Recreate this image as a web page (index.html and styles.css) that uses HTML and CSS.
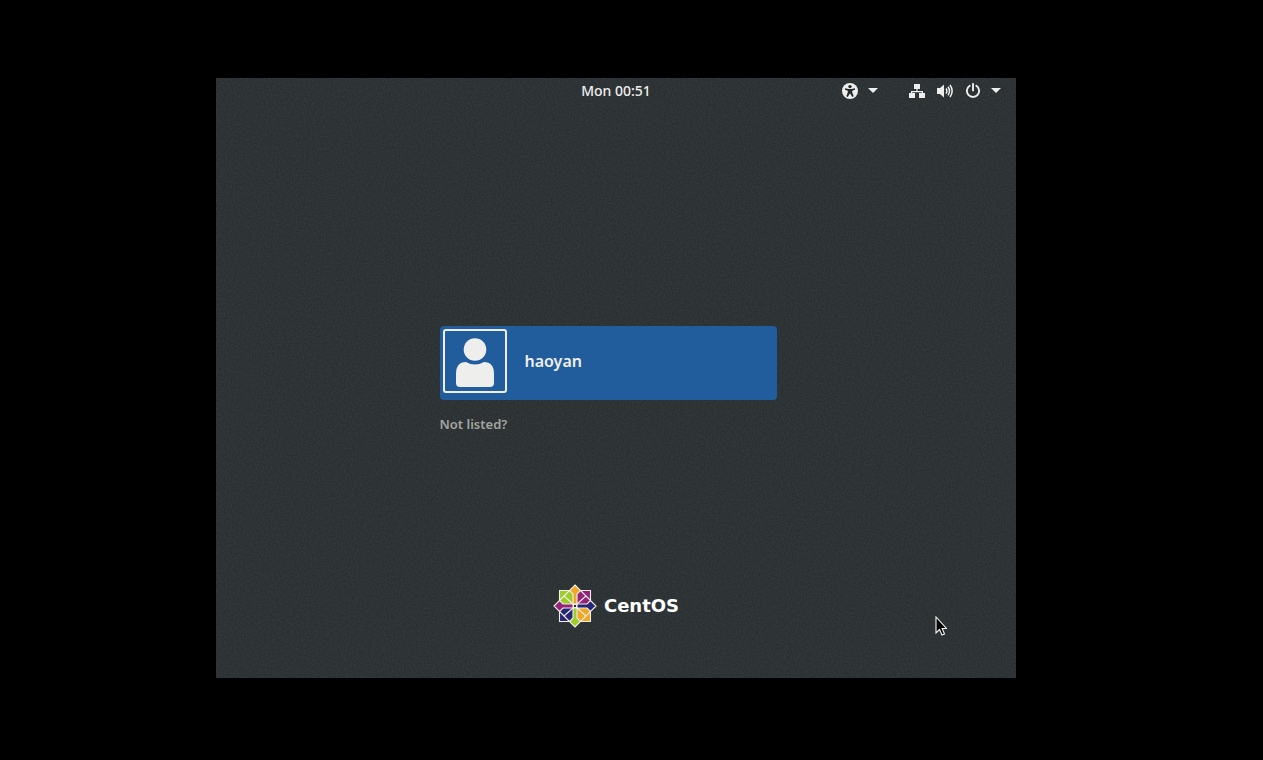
FILE: index.html
```html
<!DOCTYPE html>
<html lang="en">
<head>
<meta charset="utf-8">
<title>Login</title>
<link rel="stylesheet" href="styles.css">
</head>
<body>
<div class="screen">
  <svg class="texture" aria-hidden="true">
    <filter id="grain"><feTurbulence type="fractalNoise" baseFrequency="0.6" numOctaves="2" seed="4"/><feColorMatrix values="0 0 0 0 1  0 0 0 0 1  0 0 0 0 1  0.5 0 0 0 -0.15"/></filter>
    <rect width="100%" height="100%" filter="url(#grain)"/>
  </svg>
  <header class="topbar">
    <time class="clock">Mon 00:51</time>
    <div class="status">
      <button class="menu" type="button" aria-label="Accessibility">
        <svg class="icon" viewBox="0 0 16 16"><circle cx="8" cy="8" r="8" fill="#eeeeec"/><circle cx="8" cy="3.6" r="1.7" fill="#22282a"/><path d="M3 5.2 6.4 6H9.6L13 5.2V6.8L10.2 7.8V9.2L11.7 13.3 10.3 13.9 8 10.2 5.7 13.9 4.3 13.3 5.8 9.2V7.8L3 6.8Z" fill="#22282a"/></svg>
        <svg class="caret" viewBox="0 0 10 6"><path d="M0 0H10L5 5Z" fill="#eeeeec"/></svg>
      </button>
      <button class="menu" type="button" aria-label="System">
        <svg class="icon" viewBox="0 0 16 16" fill="#eeeeec"><path d="M5 1H11V6H8.6V8H14V10H16V15H10V10H12.8V9.2H3.2V10H6V15H0V10H2V8H7.4V6H5Z"/></svg>
        <svg class="icon" viewBox="0 0 16 16"><path d="M0 5H3L7 1.5V14.5L3 11H0Z" fill="#eeeeec"/><path d="M9 5.5Q10.8 8 9 10.5M11 3.7Q14 8 11 12.3M13 2Q17.3 8 13 14" fill="none" stroke="#eeeeec" stroke-width="1.5"/></svg>
        <svg class="icon" viewBox="0 0 16 16"><path d="M4.7 2.8A6.1 6.1 0 1 0 11.3 2.8M8 .9V7.5" fill="none" stroke="#eeeeec" stroke-width="1.9" stroke-linecap="round"/></svg>
        <svg class="caret" viewBox="0 0 10 6"><path d="M0 0H10L5 5Z" fill="#eeeeec"/></svg>
      </button>
    </div>
  </header>
  <main class="login">
    <button class="user" type="button">
      <svg class="avatar" viewBox="0 0 60 60"><circle cx="30" cy="18.5" r="11.3" fill="#eeeeec"/><path d="M11 52V43Q11 31 21 31Q30 36 39 31Q49 31 49 43V52Q49 56 45 56H15Q11 56 11 52Z" fill="#eeeeec"/></svg>
      <span class="name">haoyan</span>
    </button>
    <button class="unlisted" type="button">Not listed?</button>
  </main>
  <footer class="brand">
    <svg class="logo" viewBox="0 0 44 44" stroke="#f1eee8" stroke-width="1.1">
      <path d="M6.5 6.5H22V22H6.5Z" fill="#9ccd2a"/>
      <path d="M22 6.5H37.5V22H22Z" fill="#932279"/>
      <path d="M6.5 22H22V37.5H6.5Z" fill="#262577"/>
      <path d="M22 22H37.5V37.5H22Z" fill="#efa724"/>
      <path d="M22 1 27.5 6.5 24 10V20H20V10L16.5 6.5Z" fill="#efa724"/>
      <path d="M43 22 37.5 27.5 34 24H24V20H34L37.5 16.5Z" fill="#262577"/>
      <path d="M22 43 16.5 37.5 20 34V24H24V34L27.5 37.5Z" fill="#9ccd2a"/>
      <path d="M1 22 6.5 16.5 10 20H20V24H10L6.5 27.5Z" fill="#932279"/>
      <path d="M16.5 6.5 11 12 20 20M6.5 16.5 11 12M27.5 6.5 33 12 24 20M37.5 16.5 33 12M6.5 27.5 11 32 20 24M16.5 37.5 11 32M37.5 27.5 33 32 24 24M27.5 37.5 33 32" fill="none"/>
      <path d="M20.5 20.5H23.5V23.5H20.5Z" fill="#24242b"/>
    </svg>
    <span class="wordmark">CentOS</span>
  </footer>
  <svg class="pointer" viewBox="0 0 12 20"><path d="M1 1V17L4.5 13.5 7 19 9.5 18 7.2 12.5H11.5Z" fill="#050505" stroke="#f4f4f4" stroke-width="1.1"/></svg>
</div>
</body>
</html>
```
FILE: styles.css
```css
* { box-sizing: border-box; }
body {
  margin: 0;
  min-height: 100vh;
  padding: 78px 247px 82px 216px;
  display: flex;
  background: #000;
  color: #eeeeec;
  font-family: "Noto Sans", "Open Sans", sans-serif;
}
button {
  margin: 0;
  padding: 0;
  border: 0;
  background: none;
  color: inherit;
  font: inherit;
}
svg { display: block; flex: none; }
.screen {
  position: relative;
  flex: 1;
  display: flex;
  flex-direction: column;
  background: #2a3032;
}
.texture {
  position: absolute;
  inset: 0;
  width: 100%;
  height: 100%;
  opacity: .2;
}
.topbar, .login, .brand { position: relative; }
.topbar {
  display: grid;
  grid-template-columns: 1fr auto 1fr;
  align-items: center;
  height: 26px;
  padding: 0 15px;
}
.clock {
  grid-column: 2;
  font-size: 14px;
  font-weight: 500;
  line-height: 20px;
}
.status {
  justify-self: end;
  display: flex;
  gap: 31px;
}
.menu {
  display: flex;
  align-items: center;
  gap: 12px;
}
.icon { width: 16px; height: 16px; }
.icon + .caret { margin-left: -2px; }
.caret { width: 10px; height: 6px; }
.login {
  flex: 1;
  display: flex;
  flex-direction: column;
  justify-content: center;
  align-items: flex-start;
  gap: 14px;
  width: 353px;
  margin: 0 auto;
  padding: 72px 16px 0 0;
}
.user {
  display: flex;
  align-items: center;
  gap: 18px;
  width: 100%;
  padding: 3px 3px 7px;
  border-radius: 4px;
  background: #215d9c;
}
.avatar {
  width: 64px;
  height: 64px;
  border: 2px solid #eeeeec;
  border-radius: 3px;
}
.name {
  font-size: 16px;
  font-weight: 600;
  line-height: 24px;
}
.unlisted {
  color: #a3a49f;
  font-size: 13px;
  font-weight: 600;
  line-height: 20px;
}
.brand {
  display: flex;
  justify-content: center;
  align-items: center;
  gap: 7px;
  padding-bottom: 50px;
}
.logo { width: 44px; height: 44px; }
.wordmark {
  color: #fff;
  font: bold 18px/24px "DejaVu Sans", sans-serif;
}
.pointer {
  position: absolute;
  right: 69px;
  bottom: 42px;
  width: 12px;
  height: 20px;
}
```
